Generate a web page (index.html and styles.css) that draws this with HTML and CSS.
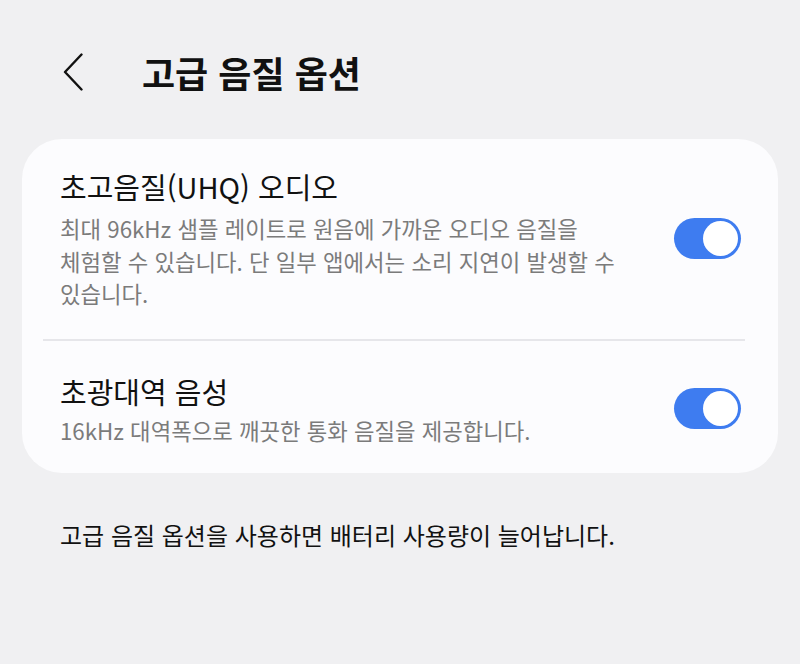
FILE: index.html
```html
<!DOCTYPE html>
<html lang="ko">
<head>
<meta charset="utf-8">
<link rel="stylesheet" href="styles.css">
</head>
<body>
<div class="screen">
  <header class="appbar">
    <button class="back" aria-label="뒤로">
      <svg width="20" height="38" viewBox="0 0 20 38"><path d="M18.5 1.5 L2 19 L18.5 36.5" fill="none" stroke="#111" stroke-width="2.4" stroke-linecap="round" stroke-linejoin="round"/></svg>
    </button>
    <h1 class="title">고급 음질 옵션</h1>
  </header>

  <section class="card">
    <div class="row first">
      <div class="text">
        <div class="row-title">초고음질(UHQ) 오디오</div>
        <div class="row-desc">최대 96kHz 샘플 레이트로 원음에 가까운 오디오 음질을 체험할 수 있습니다. 단 일부 앱에서는 소리 지연이 발생할 수 있습니다.</div>
      </div>
      <div class="switch on"><span class="knob"></span></div>
    </div>
    <div class="divider"></div>
    <div class="row second">
      <div class="text">
        <div class="row-title">초광대역 음성</div>
        <div class="row-desc">16kHz 대역폭으로 깨끗한 통화 음질을 제공합니다.</div>
      </div>
      <div class="switch on"><span class="knob"></span></div>
    </div>
  </section>

  <p class="footnote">고급 음질 옵션을 사용하면 배터리 사용량이 늘어납니다.</p>
</div>
</body>
</html>
```

FILE: styles.css
```css
html, body {
  margin: 0;
  padding: 0;
  background: #f0f0f2;
}
body {
  font-family: "Noto Sans CJK KR", "Noto Sans", sans-serif;
  color: #111;
  width: 800px;
  height: 664px;
  overflow: hidden;
  word-break: keep-all;
}
.screen {
  padding: 0 22px;
}
.appbar {
  display: flex;
  align-items: center;
  height: 48px;
  padding-top: 48px;
  margin-bottom: 43px;
}
.back {
  background: none;
  border: 0;
  padding: 0;
  margin-left: 41px;
  width: 20px;
  height: 38px;
  display: flex;
}
.title {
  margin: 0 0 0 59px;
  font-size: 36px;
  line-height: 48px;
  font-weight: 700;
}
.card {
  background: #fcfcfe;
  border-radius: 40px;
}
.row {
  display: flex;
  align-items: center;
  padding: 0 37px 0 38px;
}
.row.first {
  padding-top: 28px;
  padding-bottom: 29px;
}
.row.second {
  padding-top: 31px;
  padding-bottom: 27px;
}
.text {
  flex: 1;
  min-width: 0;
  padding-right: 44px;
}
.row-title {
  font-size: 29px;
  line-height: 38px;
  color: #111;
}
.row-desc {
  font-size: 22.3px;
  line-height: 32.5px;
  color: #7b7b7b;
  margin-top: 7px;
}
.second .row-desc {
  margin-top: 4px;
}
.divider {
  height: 2px;
  background: #e6e6ea;
  margin: 0 33px 0 21px;
}
.switch {
  width: 67px;
  height: 41px;
  border-radius: 21px;
  background: #3e7cf0;
  position: relative;
  flex: none;
}
.knob {
  position: absolute;
  right: 3px;
  top: 3px;
  width: 35px;
  height: 35px;
  border-radius: 50%;
  background: #fff;
}
.footnote {
  margin: 46px 0 0 38px;
  font-size: 24px;
  line-height: 32px;
  color: #111;
}
```
